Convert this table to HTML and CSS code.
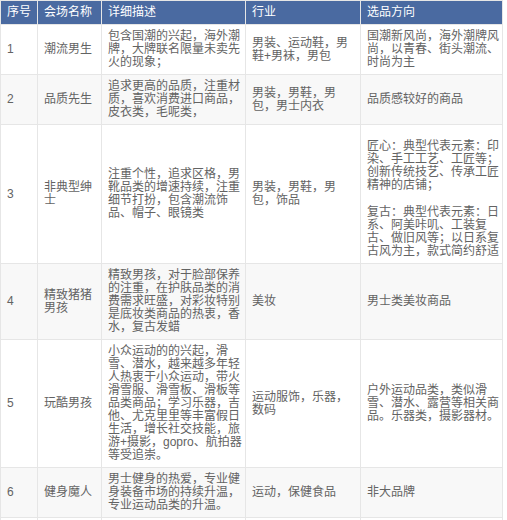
FILE: index.html
```html
<!DOCTYPE html>
<html lang="zh-CN">
<head>
<meta charset="utf-8">
<link rel="stylesheet" href="styles.css">
</head>
<body>
<table class="venue-table">
  <colgroup>
    <col class="c-no">
    <col class="c-name">
    <col class="c-desc">
    <col class="c-ind">
    <col class="c-dir">
  </colgroup>
  <thead>
    <tr>
      <th>序号</th>
      <th>会场名称</th>
      <th>详细描述</th>
      <th>行业</th>
      <th>选品方向</th>
    </tr>
  </thead>
  <tbody>
    <tr>
      <td>1</td>
      <td>潮流男生</td>
      <td>包含国潮的兴起，海外潮牌，大牌联名限量未卖先火的现象；</td>
      <td>男装、运动鞋，男鞋+男袜，男包</td>
      <td>国潮新风尚，海外潮牌风尚，以青春、街头潮流、时尚为主</td>
    </tr>
    <tr>
      <td>2</td>
      <td>品质先生</td>
      <td>追求更高的品质，注重材质，喜欢消费进口商品，皮衣类，毛呢类，</td>
      <td>男装，男鞋，男包，男士内衣</td>
      <td>品质感较好的商品</td>
    </tr>
    <tr>
      <td>3</td>
      <td>非典型绅士</td>
      <td>注重个性，追求区格，男靴品类的增速持续，注重细节打扮，包含潮流饰品、帽子、眼镜类</td>
      <td>男装，男鞋，男包，饰品</td>
      <td>
        <div class="para para-first">匠心：典型代表元素：印染、手工工艺、工匠等；创新传统技艺、传承工匠精神的店铺；</div>
        <div class="para para-next">复古：典型代表元素：日系、阿美咔叽、工装复古、做旧风等；以日系复古风为主，款式简约舒适</div>
      </td>
    </tr>
    <tr>
      <td>4</td>
      <td>精致猪猪男孩</td>
      <td>精致男孩，对于脸部保养的注重，在护肤品类的消费需求旺盛，对彩妆特别是底妆类商品的热衷，香水，复古发蜡</td>
      <td>美妆</td>
      <td>男士类美妆商品</td>
    </tr>
    <tr>
      <td>5</td>
      <td>玩酷男孩</td>
      <td>小众运动的的兴起，滑雪、潜水，越来越多年轻人热衷于小众运动，带火滑雪服、滑雪板、滑板等品类商品；学习乐器，吉他、尤克里里等丰富假日生活，增长社交技能，旅游+摄影，gopro、航拍器等受追崇。</td>
      <td>运动服饰，乐器，数码</td>
      <td>户外运动品类，类似滑雪、潜水、露营等相关商品。乐器类，摄影器材。</td>
    </tr>
    <tr>
      <td>6</td>
      <td>健身魔人</td>
      <td>男士健身的热爱，专业健身装备市场的持续升温，专业运动品类的升温。</td>
      <td>运动，保健食品</td>
      <td>非大品牌</td>
    </tr>
    <tr class="row-more">
      <td>&nbsp;</td>
      <td>&nbsp;</td>
      <td>&nbsp;</td>
      <td>&nbsp;</td>
      <td>&nbsp;</td>
    </tr>
  </tbody>
</table>
</body>
</html>
```

FILE: styles.css
```css
html, body {
  margin: 0;
  padding: 0;
  background: #ffffff;
}

body {
  font-family: "Liberation Sans", "Noto Sans CJK SC", sans-serif;
  font-size: 12px;
  line-height: 13px;
  color: #636363;
}

.venue-table {
  border-collapse: collapse;
  table-layout: fixed;
  width: 502px;
}

.c-no { width: 37px; }
.c-name { width: 64px; }
.c-desc { width: 144px; }
.c-ind { width: 115px; }
.c-dir { width: 142px; }

.venue-table th,
.venue-table td {
  border: 1px solid #e6e6e6;
  padding: 5px 2px 5px 6px;
  text-align: left;
  vertical-align: middle;
}

.venue-table th {
  background: #4a6aa1;
  color: #ffffff;
  font-weight: normal;
  font-size: 12px;
  height: 13px;
}

.venue-table thead tr {
  border-top: 1px solid #4a6aa1;
}

.venue-table tbody tr:nth-child(even) td {
  background: #f8f8f8;
}

.para-first {
  margin-top: 10px;
}

.para-next {
  margin-top: 14px;
}

.row-more td {
  height: 30px;
}
```
